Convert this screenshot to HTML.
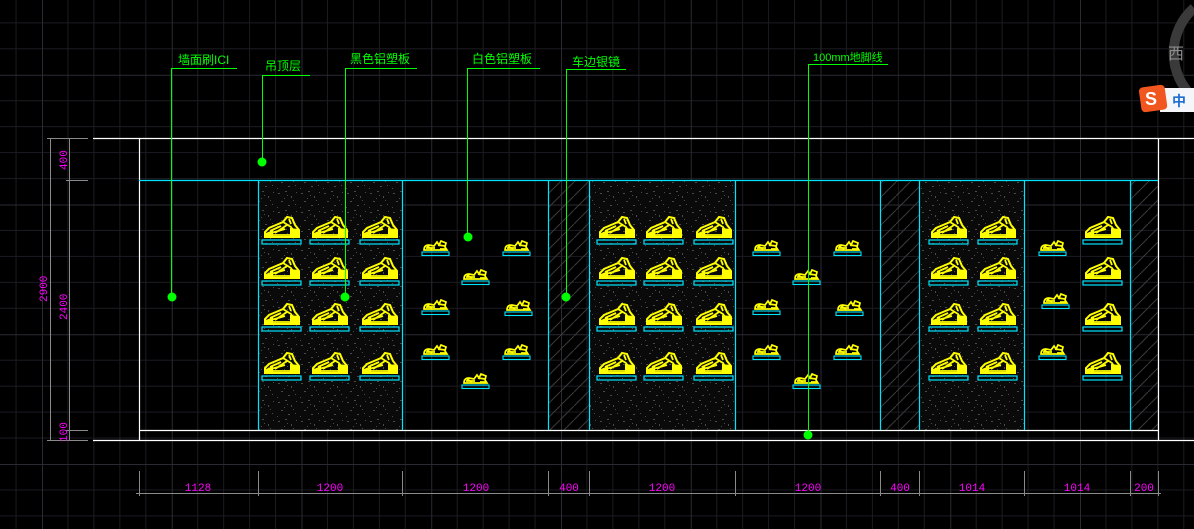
<!DOCTYPE html>
<html><head><meta charset="utf-8"><style>
html,body{margin:0;padding:0;background:#000;overflow:hidden}
svg{display:block}
.t{font-family:"Liberation Sans","Noto Sans CJK SC",sans-serif;font-size:12px;fill:#00ff00}
.m{font-family:"Liberation Mono",monospace;font-size:11px;fill:#ff00ff}
</style></head><body>
<svg width="1194" height="529" viewBox="0 0 1194 529" xmlns="http://www.w3.org/2000/svg">
<defs>
<pattern id="grid" patternUnits="userSpaceOnUse" x="42" y="-55" width="129.75" height="129.75">
<g stroke="#1b1b22" stroke-width="1">
<line x1="25.95" y1="0" x2="25.95" y2="130"/><line x1="51.9" y1="0" x2="51.9" y2="130"/><line x1="77.85" y1="0" x2="77.85" y2="130"/><line x1="103.8" y1="0" x2="103.8" y2="130"/>
<line y1="25.95" x1="0" y2="25.95" x2="130"/><line y1="51.9" x1="0" y2="51.9" x2="130"/><line y1="77.85" x1="0" y2="77.85" x2="130"/><line y1="103.8" x1="0" y2="103.8" x2="130"/>
</g>
<g stroke="#2a2a34" stroke-width="1"><line x1="0.5" y1="0" x2="0.5" y2="130"/><line x1="0" y1="0.5" x2="130" y2="0.5"/></g>
</pattern>
<pattern id="gran" patternUnits="userSpaceOnUse" width="23" height="19">
<rect width="23" height="19" fill="#0a0a0a"/>
<g fill="#4a4a4a"><rect x="2" y="3" width="2" height="1"/><rect x="9" y="1" width="2" height="1"/><rect x="15" y="6" width="1" height="2"/><rect x="5" y="11" width="2" height="1"/><rect x="19" y="14" width="1" height="1"/><rect x="12" y="15" width="2" height="1"/><rect x="20" y="2" width="1" height="1"/><rect x="1" y="17" width="1" height="1"/><rect x="8" y="8" width="1" height="1"/><rect x="17" y="10" width="1" height="1"/><rect x="11" y="5" width="1" height="1"/></g>
</pattern>
<pattern id="hatch" patternUnits="userSpaceOnUse" width="14" height="14">
<line x1="0" y1="14" x2="14" y2="0" stroke="#3a3a3a" stroke-width="1"/>
</pattern>
<symbol id="big" viewBox="0 0 42 30" overflow="visible">
<path d="M4 22 L38 22 L38 15 L34 10 L31 3 L26 2 L22 7 L15 10 L8 13 L4 17 Z" fill="none" stroke="#ffff00" stroke-width="2"/>
<path d="M9 16 L20 11 M14 18 L26 10 M22 7 L30 12 L34 18 M6 20 L36 20 M28 4 L30 9 M10 18 L24 14" stroke="#ffff00" stroke-width="1.8" fill="none"/>
<path d="M29 13 L37 14 L37 21 L29 21 Z M5 18 L12 15 L12 21 L5 21 Z" fill="#ffff00"/>
<rect x="1" y="25" width="39" height="4" fill="none" stroke="#00e5ff" stroke-width="1.2"/>
</symbol>
<symbol id="sm" viewBox="0 0 30 20" overflow="visible">
<path d="M3 13 Q3 8 8 8 L13 9 L16 5 L18 8 L20 4 L25 6 L24 10 L26 13 Z" fill="none" stroke="#ffff00" stroke-width="1.7"/>
<path d="M5 11 L14 11 M17 8 L24 9 M19 12 L25 12 M6 9 L11 12" stroke="#ffff00" stroke-width="1.7"/>
<rect x="1" y="15" width="27" height="3.5" fill="none" stroke="#00e5ff" stroke-width="1.1"/>
</symbol>
</defs>
<rect width="1194" height="529" fill="#000"/>
<rect width="1194" height="529" fill="url(#grid)"/>

<rect x="258" y="181" width="144" height="249" fill="url(#gran)"/>
<rect x="589" y="181" width="146" height="249" fill="url(#gran)"/>
<rect x="919" y="181" width="105" height="249" fill="url(#gran)"/>
<rect x="548" y="181" width="41" height="249" fill="url(#hatch)"/>
<rect x="880" y="181" width="39" height="249" fill="url(#hatch)"/>
<rect x="1130" y="181" width="28" height="249" fill="url(#hatch)"/>

<g stroke="#ffffff" stroke-width="1.2" fill="none">
<line x1="93" y1="138.5" x2="1194" y2="138.5"/>
<line x1="93" y1="440.5" x2="1194" y2="440.5"/>
<line x1="139.5" y1="138" x2="139.5" y2="440"/>
<line x1="1158.5" y1="138" x2="1158.5" y2="440"/>
<line x1="139" y1="430.5" x2="1158" y2="430.5"/>
</g>
<g stroke="#00e5ff" stroke-width="1.2">
<line x1="139" y1="180.5" x2="1158" y2="180.5"/>
<line x1="258.5" y1="180" x2="258.5" y2="430"/>
<line x1="402.5" y1="180" x2="402.5" y2="430"/>
<line x1="548.5" y1="180" x2="548.5" y2="430"/>
<line x1="589.5" y1="180" x2="589.5" y2="430"/>
<line x1="735.5" y1="180" x2="735.5" y2="430"/>
<line x1="880.5" y1="180" x2="880.5" y2="430"/>
<line x1="919.5" y1="180" x2="919.5" y2="430"/>
<line x1="1024.5" y1="180" x2="1024.5" y2="430"/>
<line x1="1130.5" y1="180" x2="1130.5" y2="430"/>
</g>

<g>
<use href="#big" x="261" y="215" width="42" height="30"/><use href="#big" x="309" y="215" width="42" height="30"/><use href="#big" x="359" y="215" width="42" height="30"/>
<use href="#big" x="261" y="256" width="42" height="30"/><use href="#big" x="309" y="256" width="42" height="30"/><use href="#big" x="359" y="256" width="42" height="30"/>
<use href="#big" x="261" y="302" width="42" height="30"/><use href="#big" x="309" y="302" width="42" height="30"/><use href="#big" x="359" y="302" width="42" height="30"/>
<use href="#big" x="261" y="351" width="42" height="30"/><use href="#big" x="309" y="351" width="42" height="30"/><use href="#big" x="359" y="351" width="42" height="30"/>

<use href="#big" x="596" y="215" width="42" height="30"/><use href="#big" x="643" y="215" width="42" height="30"/><use href="#big" x="693" y="215" width="42" height="30"/>
<use href="#big" x="596" y="256" width="42" height="30"/><use href="#big" x="643" y="256" width="42" height="30"/><use href="#big" x="693" y="256" width="42" height="30"/>
<use href="#big" x="596" y="302" width="42" height="30"/><use href="#big" x="643" y="302" width="42" height="30"/><use href="#big" x="693" y="302" width="42" height="30"/>
<use href="#big" x="596" y="351" width="42" height="30"/><use href="#big" x="643" y="351" width="42" height="30"/><use href="#big" x="693" y="351" width="42" height="30"/>

<use href="#big" x="928" y="215" width="42" height="30"/><use href="#big" x="977" y="215" width="42" height="30"/><use href="#big" x="1082" y="215" width="42" height="30"/>
<use href="#big" x="928" y="256" width="42" height="30"/><use href="#big" x="977" y="256" width="42" height="30"/><use href="#big" x="1082" y="256" width="42" height="30"/>
<use href="#big" x="928" y="302" width="42" height="30"/><use href="#big" x="977" y="302" width="42" height="30"/><use href="#big" x="1082" y="302" width="42" height="30"/>
<use href="#big" x="928" y="351" width="42" height="30"/><use href="#big" x="977" y="351" width="42" height="30"/><use href="#big" x="1082" y="351" width="42" height="30"/>
</g>
<g>
<use href="#sm" x="421" y="237" width="30" height="20"/><use href="#sm" x="421" y="296" width="30" height="20"/><use href="#sm" x="421" y="341" width="30" height="20"/>
<use href="#sm" x="461" y="266" width="30" height="20"/><use href="#sm" x="461" y="370" width="30" height="20"/>
<use href="#sm" x="502" y="237" width="30" height="20"/><use href="#sm" x="504" y="297" width="30" height="20"/><use href="#sm" x="502" y="341" width="30" height="20"/>

<use href="#sm" x="752" y="237" width="30" height="20"/><use href="#sm" x="752" y="296" width="30" height="20"/><use href="#sm" x="752" y="341" width="30" height="20"/>
<use href="#sm" x="792" y="266" width="30" height="20"/><use href="#sm" x="792" y="370" width="30" height="20"/>
<use href="#sm" x="833" y="237" width="30" height="20"/><use href="#sm" x="835" y="297" width="30" height="20"/><use href="#sm" x="833" y="341" width="30" height="20"/>

<use href="#sm" x="1038" y="237" width="30" height="20"/><use href="#sm" x="1041" y="290" width="30" height="20"/><use href="#sm" x="1038" y="341" width="30" height="20"/>
</g>

<g stroke="#00ff00" stroke-width="1" fill="none">
<polyline points="237,68.5 171.5,68.5 171.5,297"/>
<polyline points="310,75.5 262.5,75.5 262.5,162"/>
<polyline points="417,68.5 345.5,68.5 345.5,297"/>
<polyline points="540,68.5 467.5,68.5 467.5,237"/>
<polyline points="626,69.5 566.5,69.5 566.5,297"/>
<polyline points="888,64.5 808.5,64.5 808.5,435"/>
</g>
<g fill="#00ff00">
<circle cx="172" cy="297" r="4.5"/><circle cx="262" cy="162" r="4.5"/><circle cx="345" cy="297" r="4.5"/>
<circle cx="468" cy="237" r="4.5"/><circle cx="566" cy="297" r="4.5"/><circle cx="808" cy="435" r="4.5"/>
</g>
<text class="t" x="178" y="64">墙面刷ICI</text>
<text class="t" x="265" y="70">吊顶层</text>
<text class="t" x="350" y="63">黑色铝塑板</text>
<text class="t" x="472" y="63">白色铝塑板</text>
<text class="t" x="572" y="66">车边银镜</text>
<text class="t" x="813" y="61" style="font-size:11px">100mm地脚线</text>

<g stroke="#8a8a8a" stroke-width="1">
<line x1="50.5" y1="138" x2="50.5" y2="440"/>
<line x1="69.5" y1="138" x2="69.5" y2="440"/>
<line x1="47" y1="138.5" x2="88" y2="138.5"/>
<line x1="66" y1="180.5" x2="88" y2="180.5"/>
<line x1="66" y1="430.5" x2="88" y2="430.5"/>
<line x1="47" y1="440.5" x2="88" y2="440.5"/>
</g>
<text class="m" transform="translate(47,302) rotate(-90)">2900</text>
<text class="m" transform="translate(67,170) rotate(-90)">400</text>
<text class="m" transform="translate(67,320) rotate(-90)">2400</text>
<text class="m" transform="translate(67,442) rotate(-90)">100</text>

<g stroke="#8a8a8a" stroke-width="1">
<line x1="136" y1="493.5" x2="1161" y2="493.5"/>
<line x1="139.5" y1="471" x2="139.5" y2="496"/><line x1="258.5" y1="471" x2="258.5" y2="496"/><line x1="402.5" y1="471" x2="402.5" y2="496"/>
<line x1="548.5" y1="471" x2="548.5" y2="496"/><line x1="589.5" y1="471" x2="589.5" y2="496"/><line x1="735.5" y1="471" x2="735.5" y2="496"/>
<line x1="880.5" y1="471" x2="880.5" y2="496"/><line x1="919.5" y1="471" x2="919.5" y2="496"/><line x1="1024.5" y1="471" x2="1024.5" y2="496"/>
<line x1="1130.5" y1="471" x2="1130.5" y2="496"/><line x1="1158.5" y1="471" x2="1158.5" y2="496"/>
</g>
<g class="m" text-anchor="middle">
<text x="198" y="491">1128</text><text x="330" y="491">1200</text><text x="476" y="491">1200</text>
<text x="569" y="491">400</text><text x="662" y="491">1200</text><text x="808" y="491">1200</text>
<text x="900" y="491">400</text><text x="972" y="491">1014</text><text x="1077" y="491">1014</text><text x="1144" y="491">200</text>
</g>

<path d="M1194 8 A60 60 0 0 0 1194 98" fill="none" stroke="#3a3a3a" stroke-width="10"/>
<text x="1168" y="59" style="font-family:'Noto Sans CJK SC',sans-serif;font-size:16px;fill:#8c8c8c">西</text>
<rect x="1160" y="88" width="34" height="24" fill="#f4f6fa"/>
<rect x="1140" y="86" width="26" height="25" rx="4" fill="#f0561d" transform="rotate(-8 1153 98)"/>
<text x="1145" y="105" style="font-family:'Liberation Sans',sans-serif;font-weight:bold;font-size:18px;fill:#fff">S</text>
<text x="1172" y="106" style="font-family:'Noto Sans CJK SC',sans-serif;font-size:14px;font-weight:bold;fill:#1f6fd1">中</text>
</svg>
</body></html>
